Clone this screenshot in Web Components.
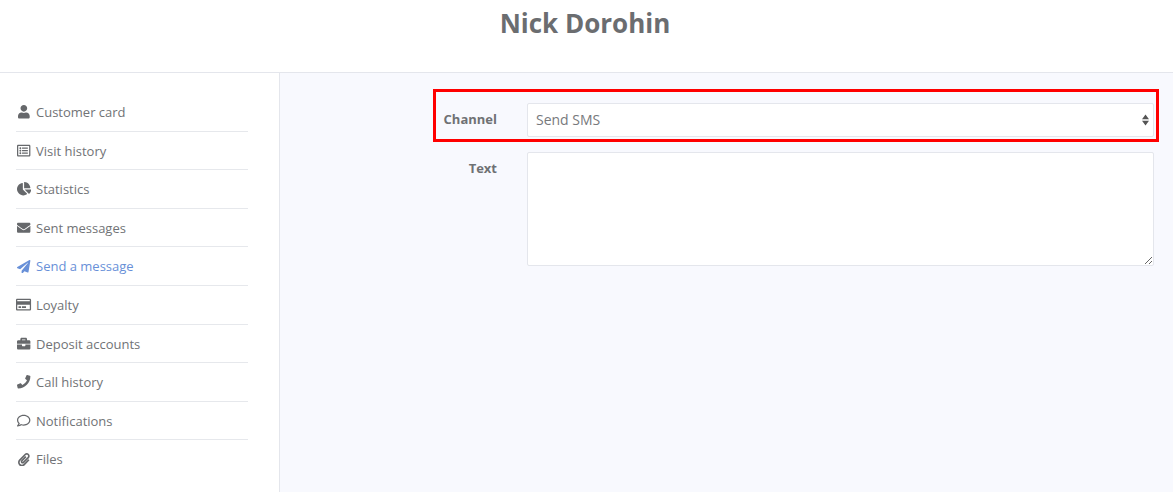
<!DOCTYPE html>
<html>
<head>
<meta charset="utf-8">
<title>Send a message</title>
<style>
    html, body { margin: 0; height: 100%; }
    body {
        font-family: "Open Sans", "Liberation Sans", sans-serif;
        color: #6f7174;
        overflow: hidden;
    }
</style>
</head>
<body>
<client-page name="Nick Dorohin">
    <side-menu slot="menu">
        <menu-item icon="user">Customer card</menu-item>
        <menu-item icon="listAlt">Visit history</menu-item>
        <menu-item icon="chartPie">Statistics</menu-item>
        <menu-item icon="envelope">Sent messages</menu-item>
        <menu-item icon="paperPlane" active>Send a message</menu-item>
        <menu-item icon="creditCard">Loyalty</menu-item>
        <menu-item icon="briefcase">Deposit accounts</menu-item>
        <menu-item icon="phone">Call history</menu-item>
        <menu-item icon="comment">Notifications</menu-item>
        <menu-item icon="paperclip" last>Files</menu-item>
    </side-menu>
    <message-form></message-form>
</client-page>

<script>
const ICONS = {
    user: [448, "M224 256c70.7 0 128-57.3 128-128S294.7 0 224 0 96 57.3 96 128s57.3 128 128 128zm89.6 32h-16.7c-22.2 10.2-46.9 16-72.9 16s-50.6-5.8-72.9-16h-16.7C60.2 288 0 348.2 0 422.4V464c0 26.5 21.5 48 48 48h352c26.5 0 48-21.5 48-48v-41.6c0-74.2-60.2-134.4-134.4-134.4z"],
    listAlt: [512, "M464 32H48C21.49 32 0 53.49 0 80v352c0 26.51 21.49 48 48 48h416c26.51 0 48-21.49 48-48V80c0-26.51-21.49-48-48-48zm-6 400H54a6 6 0 0 1-6-6V86a6 6 0 0 1 6-6h404a6 6 0 0 1 6 6v340a6 6 0 0 1-6 6zm-42-92v24c0 6.627-5.373 12-12 12H204c-6.627 0-12-5.373-12-12v-24c0-6.627 5.373-12 12-12h200c6.627 0 12 5.373 12 12zm0-96v24c0 6.627-5.373 12-12 12H204c-6.627 0-12-5.373-12-12v-24c0-6.627 5.373-12 12-12h200c6.627 0 12 5.373 12 12zm0-96v24c0 6.627-5.373 12-12 12H204c-6.627 0-12-5.373-12-12v-24c0-6.627 5.373-12 12-12h200c6.627 0 12 5.373 12 12zm-252 12c0 19.882-16.118 36-36 36s-36-16.118-36-36 16.118-36 36-36 36 16.118 36 36zm0 96c0 19.882-16.118 36-36 36s-36-16.118-36-36 16.118-36 36-36 36 16.118 36 36zm0 96c0 19.882-16.118 36-36 36s-36-16.118-36-36 16.118-36 36-36 36 16.118 36 36z"],
    chartPie: [544, "M527.79 288H290.5l158.03 158.03c6.04 6.04 15.98 6.53 22.19.68 38.7-36.46 65.32-85.61 73.13-140.86 1.34-9.46-6.51-17.85-16.06-17.85zm-15.83-64.8C503.72 103.74 408.26 8.28 288.8.04 279.68-.59 272 7.1 272 16.24V240h223.77c9.14 0 16.82-7.68 16.19-16.8zM224 288V50.71c0-9.55-8.39-17.4-17.84-16.06C86.99 51.49-4.1 155.6.14 280.37 4.5 408.51 114.83 513.59 243.03 511.98c50.4-.63 96.97-16.87 135.26-44.03 7.9-5.6 8.42-17.23 1.57-24.08L224 288z"],
    envelope: [512, "M502.3 190.8c3.9-3.1 9.7-.2 9.7 4.7V400c0 26.5-21.5 48-48 48H48c-26.5 0-48-21.5-48-48V195.6c0-5 5.7-7.8 9.7-4.7 22.4 17.4 52.1 39.5 154.1 113.6 21.1 15.4 56.7 47.8 92.2 47.6 35.7.3 72-32.8 92.3-47.6 102-74.1 131.6-96.3 154-113.7zM256 320c23.2.4 56.6-29.2 73.4-41.4 132.7-96.3 142.8-104.7 173.4-128.7 5.8-4.5 9.2-11.5 9.2-18.9v-19c0-26.5-21.5-48-48-48H48C21.5 64 0 85.5 0 112v19c0 7.4 3.4 14.3 9.2 18.9 30.6 23.9 40.7 32.4 173.4 128.7 16.8 12.2 50.2 41.8 73.4 41.4z"],
    paperPlane: [512, "M476 3.2L12.5 270.6c-18.1 10.4-15.8 35.6 2.2 43.2L121 358.4l287.3-253.2c5.5-4.9 13.3 2.6 8.6 8.3L176 407v80.5c0 23.6 28.5 32.9 42.5 15.8L282 426l124.6 52.2c14.2 6 30.4-2.9 33-18.2l72-432C515 7.8 493.3-6.8 476 3.2z"],
    creditCard: [576, "M527.9 32H48.1C21.5 32 0 53.5 0 80v352c0 26.5 21.5 48 48.1 48h479.8c26.6 0 48.1-21.5 48.1-48V80c0-26.5-21.5-48-48.1-48zM54.1 80h467.8c3.3 0 6 2.7 6 6v42H48.1V86c0-3.3 2.7-6 6-6zm467.8 352H54.1c-3.3 0-6-2.7-6-6V256h479.8v170c0 3.3-2.7 6-6 6zM192 332v40c0 6.6-5.4 12-12 12h-72c-6.6 0-12-5.4-12-12v-40c0-6.6 5.4-12 12-12h72c6.6 0 12 5.4 12 12zm192 0v40c0 6.6-5.4 12-12 12H236c-6.6 0-12-5.4-12-12v-40c0-6.6 5.4-12 12-12h136c6.6 0 12 5.4 12 12z"],
    briefcase: [512, "M320 336c0 8.84-7.16 16-16 16h-96c-8.84 0-16-7.16-16-16v-48H0v144c0 25.6 22.4 48 48 48h416c25.6 0 48-22.4 48-48V288H320v48zm144-208h-80V80c0-25.6-22.4-48-48-48H176c-25.6 0-48 22.4-48 48v48H48c-25.6 0-48 22.4-48 48v80h512v-80c0-25.6-22.4-48-48-48zm-144 0H192V96h128v32z"],
    phone: [512, "M493.4 24.6l-104-24c-11.3-2.6-22.9 3.3-27.5 13.9l-48 112c-4.2 9.8-1.4 21.3 6.9 28l60.6 49.6c-36 76.7-98.9 140.5-177.2 177.2l-49.6-60.6c-6.8-8.3-18.2-11.1-28-6.9l-112 48C3.9 366.5-2 378.1.6 389.4l24 104C27.1 504.2 36.7 512 48 512c256.1 0 464-207.5 464-464 0-11.2-7.7-20.9-18.6-23.4z"],
    comment: [512, "M256 32C114.6 32 0 125.1 0 240c0 47.6 19.9 91.2 52.9 126.3C38 405.7 7 439.1 6.5 439.5c-6.6 7-8.4 17.2-4.6 26S14.4 480 24 480c61.5 0 110-25.7 139.1-46.3C192 442.8 223.2 448 256 448c141.4 0 256-93.1 256-208S397.4 32 256 32zm0 368c-26.7 0-53.1-4.1-78.4-12.1l-22.7-7.2-19.5 13.8c-14.3 10.1-33.9 21.4-57.5 29 7.3-12.1 14.4-25.7 19.9-40.2l10.6-28.1-20.6-21.8C69.7 314.1 48 282.2 48 240c0-88.2 93.3-160 208-160s208 71.8 208 160-93.3 160-208 160z"],
    paperclip: [448, "M43.246 466.142c-58.43-60.289-57.341-157.511 1.386-217.581L254.392 34c44.316-45.332 116.351-45.336 160.671 0 43.89 44.894 43.943 117.329 0 162.276L232.214 383.128c-29.855 30.537-78.633 30.111-107.982-.998-28.275-29.97-27.368-77.473 1.452-106.953l143.743-146.835c6.182-6.314 16.312-6.422 22.626-.241l22.861 22.379c6.315 6.182 6.422 16.312.241 22.626L171.427 319.927c-4.932 5.045-5.236 13.428-.648 18.292 4.372 4.634 11.245 4.711 15.688.165l182.849-186.851c19.613-20.062 19.613-52.725-.011-72.798-19.189-19.627-49.957-19.637-69.154 0L90.39 293.295c-34.763 35.56-35.299 93.12-1.191 128.313 34.01 35.093 88.985 35.137 123.058.286l172.06-175.999c6.177-6.319 16.307-6.433 22.626-.256l22.877 22.364c6.319 6.177 6.434 16.307.256 22.626l-172.06 175.998c-59.576 60.938-155.943 60.216-214.77-.485z"]
};

class ClientPage extends HTMLElement {
    constructor() {
        super();
        this.attachShadow({ mode: "open" });
        this.shadowRoot.innerHTML = /*html*/ `
            <style>
                :host { display: flex; flex-direction: column; height: 100vh; background: #fff; }
                h1 {
                    margin: 0 0 -6px;
                    height: 72px;
                    padding: 6px 3px 0 0;
                    text-align: center;
                    font-size: 26px;
                    line-height: 35px;
                    font-weight: 700;
                    color: #6b6d70;
                }
                .body { flex: 1; display: flex; border-top: 1px solid #e4e6ec; min-height: 0; }
                .menu { width: 279px; flex: none; border-right: 1px solid #e4e6ec; }
                .content { flex: 1; background: #f8f9fe; }
            </style>
            <h1></h1>
            <div class="body">
                <div class="menu"><slot name="menu"></slot></div>
                <div class="content"><slot></slot></div>
            </div>
        `;
    }

    connectedCallback() {
        this.shadowRoot.querySelector("h1").textContent = this.getAttribute("name");
    }
}

class SideMenu extends HTMLElement {
    constructor() {
        super();
        this.attachShadow({ mode: "open" });
        this.shadowRoot.innerHTML = /*html*/ `
            <style>
                :host { display: block; padding: 20px 31px 0 16px; }
            </style>
            <slot></slot>
        `;
    }
}

class MenuItem extends HTMLElement {
    constructor() {
        super();
        this.attachShadow({ mode: "open" });
    }

    connectedCallback() {
        const [w, d] = ICONS[this.getAttribute("icon")];
        this.shadowRoot.innerHTML = /*html*/ `
            <style>
                :host {
                    display: flex;
                    align-items: center;
                    height: 38.6px;
                    padding-top: .4px;
                    box-sizing: border-box;
                    border-bottom: 1px solid #e6e8ec;
                    font-size: 13px;
                    color: #717376;
                    gap: 4px;
                }
                :host([active]) { color: #6890d8; }
                :host([last]) { border-bottom-color: transparent; }
                .icon { width: 16px; display: flex; justify-content: center; flex: none; color: #66686b; }
                :host([active]) .icon { color: #6890d8; }
                svg { height: 13.4px; fill: currentColor; display: block; }
            </style>
            <span class="icon"><svg viewBox="0 0 ${w} 512"><path d="${d}"/></svg></span>
            <slot></slot>
        `;
    }
}

class MessageForm extends HTMLElement {
    constructor() {
        super();
        this.attachShadow({ mode: "open" });
        this.shadowRoot.innerHTML = /*html*/ `
            <style>
                :host {
                    display: grid;
                    grid-template-columns: 63px 1fr;
                    column-gap: 30px;
                    row-gap: 15px;
                    padding: 30px 19px 0 154px;
                    position: relative;
                    font-size: 13px;
                }
                label { font-weight: 700; text-align: right; color: #6f7174; }
                .ch { line-height: 34px; margin-top: -1px; }
                .tx { line-height: 18px; padding-top: 7px; }
                select, textarea {
                    font: inherit;
                    font-size: 14px;
                    color: #77797c;
                    background-color: #fff;
                    border: 1px solid #e4e6ec;
                    border-radius: 2px;
                    box-sizing: border-box;
                    width: 100%;
                    outline: none;
                    display: block;
                    margin: 0;
                }
                select {
                    height: 34px;
                    padding: 0 24px 2px 8px;
                    appearance: none;
                    -webkit-appearance: none;
                    background-image: url("data:image/svg+xml,%3Csvg xmlns='http://www.w3.org/2000/svg' width='7' height='12'%3E%3Cpath d='M3.5 .5 L7 5.2 H0z M3.5 11.5 L0 6.8 H7z' fill='%23555'/%3E%3C/svg%3E");
                    background-repeat: no-repeat;
                    background-position: right 4px center;
                }
                textarea { height: 114px; resize: vertical; padding: 8px; }
                .mark {
                    position: absolute;
                    left: 153px;
                    top: 16px;
                    width: 726px;
                    height: 53px;
                    box-sizing: border-box;
                    border: 3px solid #f00;
                    pointer-events: none;
                }
            </style>
            <label class="ch">Channel</label>
            <select><option>Send SMS</option></select>
            <label class="tx">Text</label>
            <textarea></textarea>
            <div class="mark"></div>
        `;
    }
}

customElements.define("client-page", ClientPage);
customElements.define("side-menu", SideMenu);
customElements.define("menu-item", MenuItem);
customElements.define("message-form", MessageForm);
</script>
</body>
</html>
